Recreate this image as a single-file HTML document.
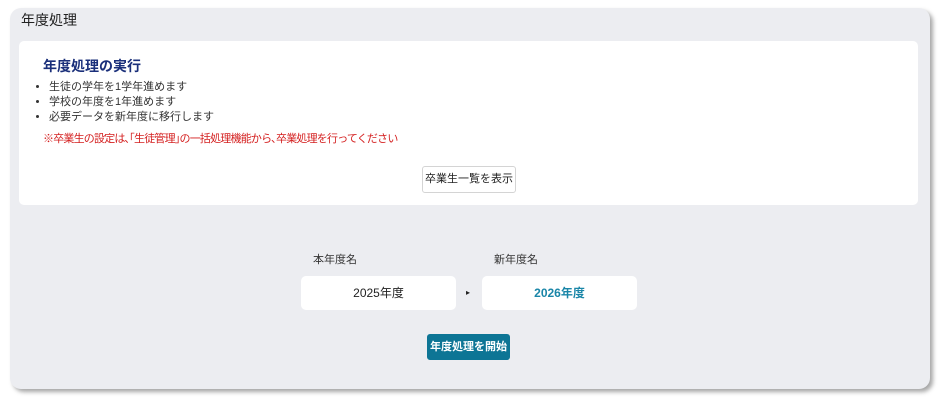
<!DOCTYPE html>
<html><head><meta charset="utf-8"><style>
body{margin:0;width:946px;height:406px;background:#fff;font-family:"Liberation Sans","Noto Sans CJK JP",sans-serif;position:relative;overflow:hidden}
.panel{position:absolute;left:10px;top:8px;width:920px;height:381px;background:#ecedf1;border-radius:11px;box-shadow:3px 3px 4px rgba(0,0,0,0.35)}
.t{position:absolute;left:21px;top:10px;font-size:14px;color:#222}
.card{position:absolute;left:19px;top:41px;width:899px;height:164px;background:#fff;border-radius:5px}
h2{position:absolute;left:43px;top:56px;margin:0;font-size:14px;font-weight:bold;color:#1a2f7a}
ul{position:absolute;left:34px;top:80px;margin:0;padding:0 0 0 15px;font-size:11px;color:#333;line-height:15px}
.red{position:absolute;left:43px;top:130px;font-size:11px;color:#d42020;letter-spacing:-0.8px;white-space:nowrap}
.btn1{position:absolute;left:422px;top:166px;width:92px;height:25px;border:1px solid #d4d4d4;border-radius:3px;font-size:11px;color:#222;text-align:center;line-height:25px;background:#fff}
.lab{position:absolute;top:251px;font-size:11px;color:#333}
.box{position:absolute;top:276px;width:155px;height:34px;background:#fff;border-radius:5px;text-align:center;line-height:34px;font-size:12px;color:#222}
.go{position:absolute;left:427px;top:334px;width:83px;height:26px;background:#0d7595;border-radius:3px;color:#fff;font-size:11px;font-weight:bold;text-align:center;line-height:26px}
</style></head><body>
<div class="panel"></div>
<div class="t">年度処理</div>
<div class="card"></div>
<h2>年度処理の実行</h2>
<ul><li>生徒の学年を1学年進めます</li><li>学校の年度を1年進めます</li><li>必要データを新年度に移行します</li></ul>
<div class="red">※卒業生の設定は､｢生徒管理｣の一括処理機能から､卒業処理を行ってください</div>
<div class="btn1">卒業生一覧を表示</div>
<div class="lab" style="left:313px">本年度名</div>
<div class="lab" style="left:494px">新年度名</div>
<div class="box" style="left:301px">2025年度</div>
<div style="position:absolute;left:466px;top:288px;font-size:8px;color:#222">▸</div>
<div class="box" style="left:482px;color:#1a86a8;font-weight:bold">2026年度</div>
<div class="go">年度処理を開始</div>
</body></html>
